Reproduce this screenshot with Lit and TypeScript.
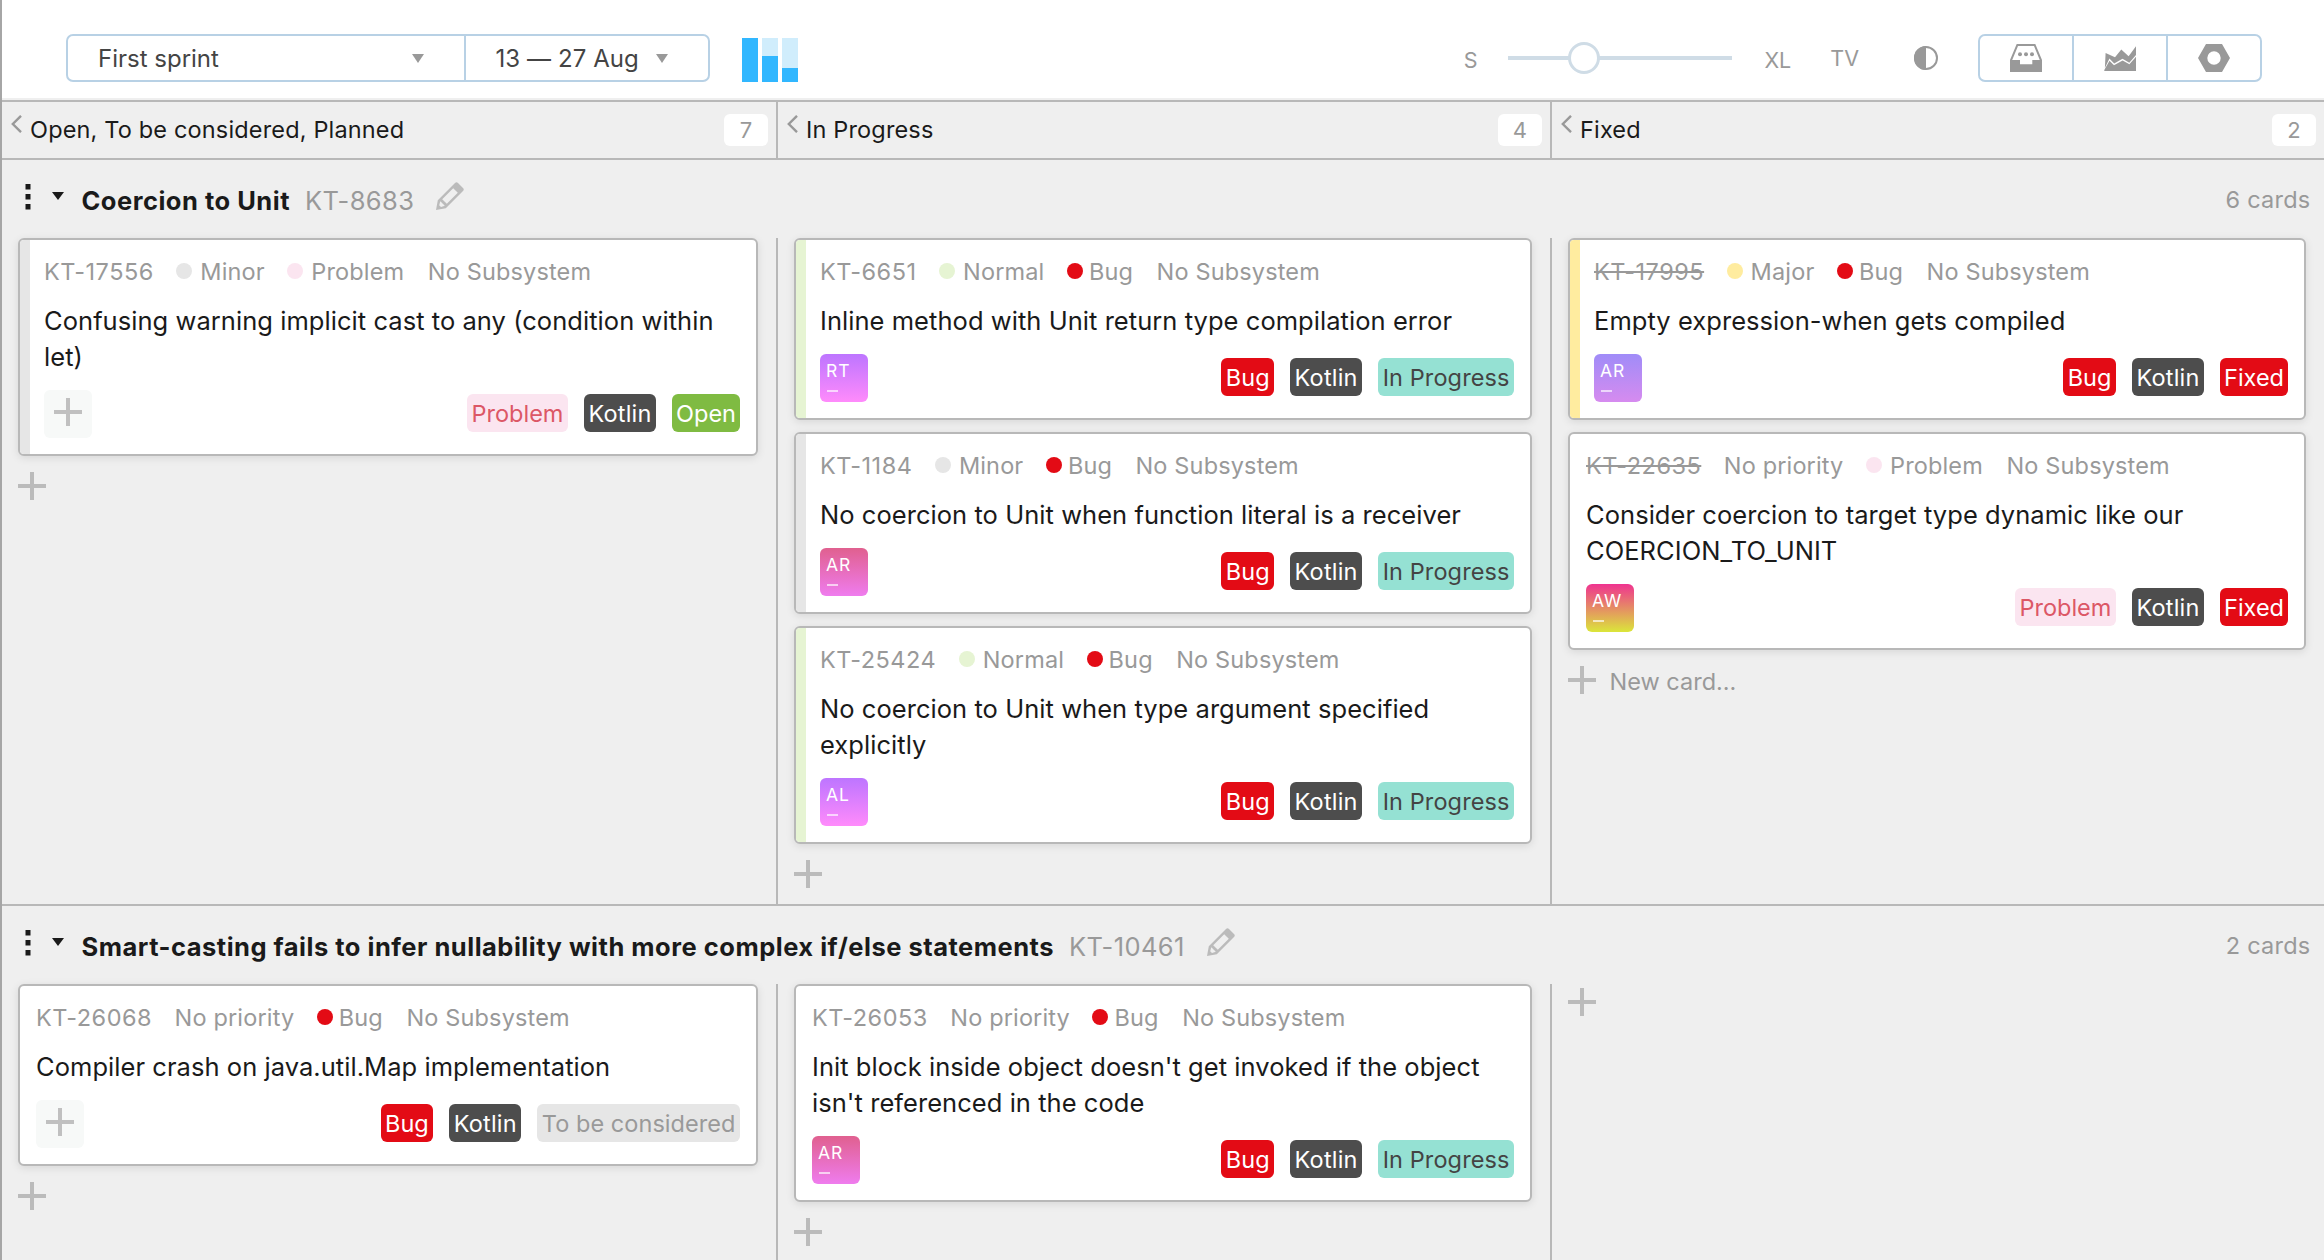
import { LitElement, html, css, svg, nothing } from "lit";
import { customElement, property } from "lit/decorators.js";
import { classMap } from "lit/directives/class-map.js";

type Tone = "minor" | "normal" | "major" | "bug" | "problem";
interface Field { text: string; tone?: Tone }
interface Tag { text: string; kind: string }
interface Card {
  id: string;
  done?: boolean;
  bar?: Tone;
  fields: Field[];
  title: string;
  avatar?: { initials: string; look: string };
  tags: Tag[];
}
interface Lane { title: string; id: string; count: string; cells: Card[][]; newCardLabel?: boolean }

const NO_SUB: Field = { text: "No Subsystem" };
const NO_PRIO: Field = { text: "No priority" };
const MINOR: Field = { text: "Minor", tone: "minor" };
const NORMAL: Field = { text: "Normal", tone: "normal" };
const MAJOR: Field = { text: "Major", tone: "major" };
const BUG: Field = { text: "Bug", tone: "bug" };
const PROBLEM: Field = { text: "Problem", tone: "problem" };

const T_BUG: Tag = { text: "Bug", kind: "red" };
const T_FIXED: Tag = { text: "Fixed", kind: "red tight" };
const T_KOTLIN: Tag = { text: "Kotlin", kind: "dark" };
const T_PROBLEM: Tag = { text: "Problem", kind: "pink" };
const T_OPEN: Tag = { text: "Open", kind: "green tight" };
const T_PROGRESS: Tag = { text: "In Progress", kind: "teal" };
const T_CONSIDER: Tag = { text: "To be considered", kind: "grey" };

const COLUMNS = [
  { title: "Open, To be considered, Planned", count: 7 },
  { title: "In Progress", count: 4 },
  { title: "Fixed", count: 2 },
];

const LANES: Lane[] = [
  {
    title: "Coercion to Unit", id: "KT-8683", count: "6 cards", newCardLabel: true,
    cells: [
      [
        { id: "KT-17556", bar: "minor", fields: [MINOR, PROBLEM, NO_SUB], title: "Confusing warning implicit cast to any (condition within let)", tags: [T_PROBLEM, T_KOTLIN, T_OPEN] },
      ],
      [
        { id: "KT-6651", bar: "normal", fields: [NORMAL, BUG, NO_SUB], title: "Inline method with Unit return type compilation error", avatar: { initials: "RT", look: "violet" }, tags: [T_BUG, T_KOTLIN, T_PROGRESS] },
        { id: "KT-1184", bar: "minor", fields: [MINOR, BUG, NO_SUB], title: "No coercion to Unit when function literal is a receiver", avatar: { initials: "AR", look: "rose" }, tags: [T_BUG, T_KOTLIN, T_PROGRESS] },
        { id: "KT-25424", bar: "normal", fields: [NORMAL, BUG, NO_SUB], title: "No coercion to Unit when type argument specified explicitly", avatar: { initials: "AL", look: "violet" }, tags: [T_BUG, T_KOTLIN, T_PROGRESS] },
      ],
      [
        { id: "KT-17995", done: true, bar: "major", fields: [MAJOR, BUG, NO_SUB], title: "Empty expression-when gets compiled", avatar: { initials: "AR", look: "lilac" }, tags: [T_BUG, T_KOTLIN, T_FIXED] },
        { id: "KT-22635", done: true, fields: [NO_PRIO, PROBLEM, NO_SUB], title: "Consider coercion to target type dynamic like our COERCION_TO_UNIT", avatar: { initials: "AW", look: "sunset" }, tags: [T_PROBLEM, T_KOTLIN, T_FIXED] },
      ],
    ],
  },
  {
    title: "Smart-casting fails to infer nullability with more complex if/else statements", id: "KT-10461", count: "2 cards",
    cells: [
      [
        { id: "KT-26068", fields: [NO_PRIO, BUG, NO_SUB], title: "Compiler crash on java.util.Map implementation", tags: [T_BUG, T_KOTLIN, T_CONSIDER] },
      ],
      [
        { id: "KT-26053", fields: [NO_PRIO, BUG, NO_SUB], title: "Init block inside object doesn't get invoked if the object isn't referenced in the code", avatar: { initials: "AR", look: "rose" }, tags: [T_BUG, T_KOTLIN, T_PROGRESS] },
      ],
      [],
    ],
  },
];

const icon = (w: number, h: number, body: unknown, cls = "") =>
  html`<svg class="icon ${cls}" width=${w} height=${h} viewBox="0 0 ${w} ${h}" fill="currentColor">${body}</svg>`;

const plus = () => icon(28, 28, svg`<path d="M12 0h4v12h12v4H16v12h-4V16H0v-4h12z"/>`, "plus");
const caret = (h = 9) => icon(12, h, svg`<path d="M0 0h12L6 ${h}z"/>`, "caret");
const chevron = () => icon(11, 18, svg`<path d="M10 0.8 1.8 9l8.2 8.2" fill="none" stroke="currentColor" stroke-width="2.4"/>`, "chevron");
const grip = () => icon(6, 26, svg`<path d="M0.5 0h5v5.500h-5zM0.500 10h5v5.500h-5zM0.500 20h5v5.500h-5z"/>`, "grip");
const pencil = () => icon(28, 28, svg`<path fill-rule="evenodd" d="M0 28 1.800 18.200 19 1q1.500-1.500 3 0l5 5q1.500 1.500 0 3L9.800 26.200zM17.200 6.200 6.200 17.200l4.600 4.600 11-11zM4.300 19.200 3.200 23.200 5 25l3.800-1.200z"/>`, "pencil");
const inbox = () => icon(32, 28, svg`<path fill-rule="evenodd" d="M6.700 0h18.600L32 16v12H0V16zM8 2 2.200 16H10v4.300h12.300V16h7.500L24 2z"/><circle cx="10" cy="10.200" r="2"/><circle cx="16" cy="10.200" r="2"/><circle cx="22" cy="10.200" r="2"/>`);
const chart = () => icon(32, 25, svg`<path d="M1.600 7 11 11.300 17.300 3.400 24.600 10.300 32 0.300V9l-6.700 7.800-6.800-4L10.200 17.600 5.400 12.600 0.900 22z"/><path d="M0.300 25V24L5.500 14.800 10 19.200 18.600 14.400 25.400 18.200 32 10.800V25z"/>`);
const nut = () => icon(32, 28, svg`<path fill-rule="evenodd" d="M0 14 8 0h16l8 14-8 14H8zM16 7.300a6.700 6.700 0 1 0 0 13.400 6.700 6.700 0 0 0 0-13.400z"/>`);
const contrast = () => icon(24, 24, svg`<circle cx="12" cy="12" r="11" fill="none" stroke="currentColor" stroke-width="2"/><path d="M12 0a12 12 0 0 0 0 24z"/>`, "contrast");
const bars = () => html`<svg class="bars" width="56" height="44" viewBox="0 0 56 44">
  <path fill="#d0edfc" d="M20 0h16v18H20zM40 0h16v30H40z"/>
  <path fill="#31b7ff" d="M0 0h16v44H0zM20 18h16v26H20zM40 30h16v14H40z"/></svg>`;

@customElement("board-card")
export class BoardCard extends LitElement {
  @property({ attribute: false }) card!: Card;

  static styles = css`
    :host { display: block; }
    .card {
      box-sizing: border-box; display: flex; border: 2px solid #b8b8b8; border-radius: 6px;
      background: #fff; overflow: hidden; box-shadow: 0 2px 8px rgba(0, 0, 0, 0.1);
    }
    .bar { width: 10px; flex: none; }
    .body { flex: 1; min-width: 0; padding: 15px 16px 16px; }
    .bar + .body { padding-left: 14px; }
    .meta { display: flex; align-items: center; gap: 22.500px; height: 32px; font-size: 23.500px; letter-spacing: 0.150px; color: #999; white-space: nowrap; }
    .id { letter-spacing: 0.500px; }
    .done { text-decoration: line-through; text-decoration-thickness: 2px; }
    .field { display: flex; align-items: center; gap: 8px; }
    .field:last-child { margin-left: 1px; }
    .dot { width: 16px; height: 16px; border-radius: 50%; }
    .minor { background: #e6e6e6; }
    .normal { background: #e6f4d3; }
    .major { background: #ffec9f; }
    .bug { background: #e30b15; }
    .dot.bug { margin-right: -2px; }
    .problem { background: #fbe5f0; }
    .title { margin-top: 16px; font-size: 25.500px; line-height: 36px; letter-spacing: 0.050px; color: #1a1a1a; }
    .foot { display: flex; align-items: flex-start; margin-top: 15px; height: 48px; }
    .avatar {
      box-sizing: border-box; width: 48px; height: 48px; border-radius: 6px; padding: 6px 0 0 6px;
      color: #fff; font-size: 17.500px; line-height: 22px; letter-spacing: 1px;
    }
    .dash { width: 11px; height: 2px; margin: 8px 0 0 1px; background: rgba(255, 255, 255, 0.65); }
    .empty { background: #f7f9f8; color: #c0c0c0; padding: 8px 0 0 10px; }
    .icon { display: block; }
    .violet { background: linear-gradient(#bd75ff, #ff8bfb); }
    .rose { background: linear-gradient(#e0608f, #ef7cee); }
    .lilac { background: linear-gradient(#a08cf8, #d68bef); }
    .sunset { background: linear-gradient(#ef3390, #dbe63a); }
    .tags { display: flex; gap: 16px; margin: 4px 0 0 auto; }
    .tag { height: 38px; line-height: 39px; border-radius: 6px; padding: 0 4.500px; font-size: 23.500px; color: #fff; white-space: nowrap; }
    .tag.tight { padding: 0 4px; }
    .red { background: #e30b15; }
    .dark { background: #4d4d4d; letter-spacing: 0.200px; }
    .pink { background: #fbe5f0; color: #dc5766; }
    .green { background: #7fbb42; }
    .teal { background: #95e1d3; color: #444; letter-spacing: 0.100px; }
    .grey { background: #e6e6e6; color: #999; letter-spacing: 0.050px; }
  `;

  render() {
    const c = this.card;
    return html`<div class="card">
      ${c.bar ? html`<div class="bar ${c.bar}"></div>` : nothing}
      <div class="body">
        <div class="meta">
          <span class=${classMap({ id: true, done: !!c.done })}>${c.id}</span>
          ${c.fields.map((f) => html`<span class="field">${f.tone ? html`<i class="dot ${f.tone}"></i>` : nothing}<span>${f.text}</span></span>`)}
        </div>
        <div class="title">${c.title}</div>
        <div class="foot">
          ${c.avatar
            ? html`<div class="avatar ${c.avatar.look}">${c.avatar.initials}<div class="dash"></div></div>`
            : html`<div class="avatar empty">${plus()}</div>`}
          <div class="tags">${c.tags.map((t) => html`<span class="tag ${t.kind}">${t.text}</span>`)}</div>
        </div>
      </div>
    </div>`;
  }
}

@customElement("app-root")
export class AppRoot extends LitElement {
  static styles = css`
    :host {
      display: block; box-sizing: border-box; height: 1260px; overflow: hidden;
      border-left: 2px solid #a6a6a6; background: #efefef;
      font-family: Inter, "Liberation Sans", sans-serif; color: #1a1a1a;
    }
    .icon, .bars { display: block; flex: none; }
    .toolbar {
      box-sizing: border-box; height: 102px; display: flex; align-items: center; padding: 16px 62px 0 64px;
      background: linear-gradient(#fff 98px, #efefef 98px); border-bottom: 2px solid #b8b8b8;
      font-size: 24px; color: #999;
    }
    .group { box-sizing: border-box; display: flex; height: 48px; border: 2px solid #b8d1e5; border-radius: 7px; }
    .group > * + * { border-left: 2px solid #b8d1e5; }
    .select { box-sizing: border-box; display: flex; align-items: center; color: #444; white-space: nowrap; }
    .sprint { width: 396px; justify-content: space-between; padding: 0 40px 0 30px; }
    .dates { width: 244px; padding-left: 29.500px; gap: 17px; letter-spacing: 0.080px; }
    .select .caret { color: #999; }
    .bars { margin-left: 32px; margin-top: 4px; }
    .spring { flex: 1; }
    .label { font-size: 21.500px; line-height: 30px; }
    .slider {
      width: 224px; height: 32px; display: flex; align-items: center; margin: 0 32px 0 31px;
      background: linear-gradient(#cfdce6, #cfdce6) center / 100% 4px no-repeat;
    }
    .thumb { box-sizing: border-box; width: 32px; height: 32px; border: 3px solid #cfdce6; border-radius: 50%; background: #fff; margin-left: 60px; }
    .low { padding-top: 3px; }
    .tv { margin: 0 55px 0 39px; }
    .contrast { margin-right: 40px; }
    .tool { box-sizing: border-box; width: 94px; display: flex; align-items: center; justify-content: center; }
    .tool:first-child { width: 92px; }
    .heads, .cells { display: grid; grid-template-columns: 776px 774px 1fr; }
    .heads { height: 56px; border-bottom: 2px solid #b8b8b8; }
    .head { display: flex; align-items: center; padding: 0 8px 0 9px; font-size: 23.500px; letter-spacing: 0.160px; }
    .head:not(:last-child), .cell:not(:last-child) { border-right: 2px solid #b8b8b8; }
    .head .chevron { color: #999; margin: -12px 8px 0 0; }
    .head-title { margin-top: -1px; }
    .count { margin-left: auto; width: 44px; height: 32px; line-height: 32px; border-radius: 6px; background: #fff; color: #999; text-align: center; font-size: 22px; }
    .lane { display: flex; flex-direction: column; border-bottom: 2px solid #b8b8b8; }
    .lane:last-child { border-bottom: 0; }
    .lane-head { height: 78px; box-sizing: border-box; display: flex; align-items: flex-start; padding: 0 13.500px 0 23px; font-size: 25.500px; line-height: 32px; white-space: nowrap; }
    .grip { margin-top: 24px; }
    .lane-head .caret { margin: 32px 17.500px 0 21px; }
    .lane-title { font-weight: 700; letter-spacing: 0.500px; margin-top: 25px; }
    .lane-id { color: #999; margin: 25px 0 0 15px; letter-spacing: 0.400px; }
    .pencil { color: #bbb; margin: 22px 0 0 22px; }
    .lane-count { margin: 24px 0 0 auto; color: #999; font-size: 23.500px; letter-spacing: 0.250px; }
    .cells { flex: 1; }
    .cell { display: flex; flex-direction: column; gap: 12px; padding: 0 18px 16px 16px; }
    .add { display: flex; align-items: center; gap: 13.500px; height: 28px; margin-top: 4px; color: #999; font-size: 23.500px; }
    .add span { padding-top: 2px; }
    .add .plus { color: #bbb; }
  `;

  render() {
    return html`
      <div class="toolbar">
        <div class="group">
          <div class="select sprint"><span>First sprint</span>${caret()}</div>
          <div class="select dates"><span>13 — 27 Aug</span>${caret()}</div>
        </div>
        ${bars()}
        <div class="spring"></div>
        <span class="label low">S</span>
        <div class="slider"><div class="thumb"></div></div>
        <span class="label low">XL</span>
        <span class="label tv">TV</span>
        ${contrast()}
        <div class="group">
          <div class="tool">${inbox()}</div>
          <div class="tool">${chart()}</div>
          <div class="tool">${nut()}</div>
        </div>
      </div>
      <div class="heads">
        ${COLUMNS.map((c) => html`<div class="head">${chevron()}<span class="head-title">${c.title}</span><span class="count">${c.count}</span></div>`)}
      </div>
      ${LANES.map((l) => html`<section class="lane">
        <div class="lane-head">
          ${grip()}${caret(8)}
          <span class="lane-title">${l.title}</span>
          <span class="lane-id">${l.id}</span>
          ${pencil()}
          <span class="lane-count">${l.count}</span>
        </div>
        <div class="cells">
          ${l.cells.map((cards, i) => html`<div class="cell">
            ${cards.map((c) => html`<board-card .card=${c}></board-card>`)}
            <div class="add">${plus()}${l.newCardLabel && i === 2 ? html`<span>New card...</span>` : nothing}</div>
          </div>`)}
        </div>
      </section>`)}
    `;
  }
}
